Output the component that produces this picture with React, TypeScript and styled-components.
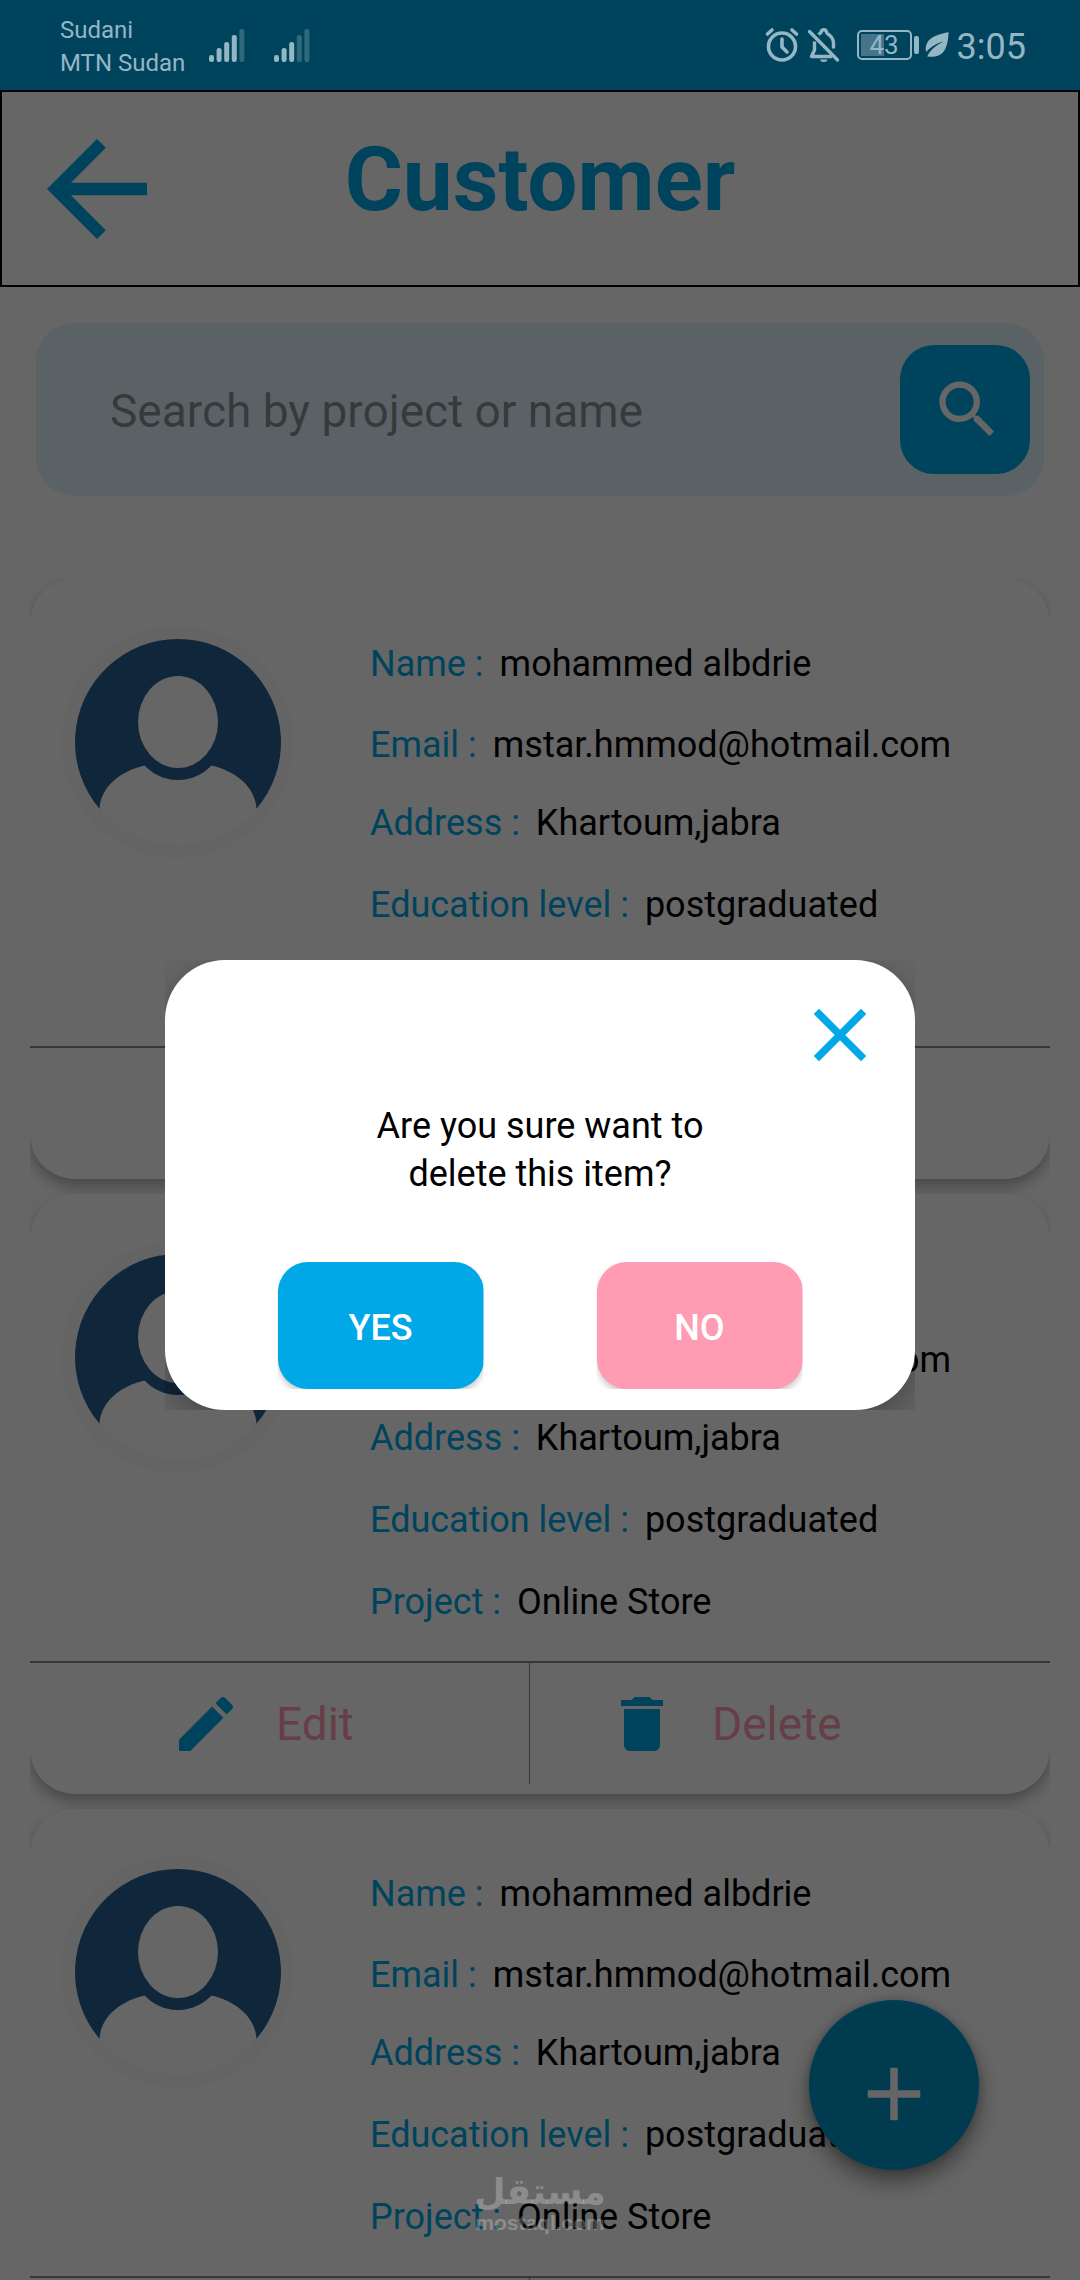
import React from "react";
import styled, { createGlobalStyle } from "styled-components";

const color = {
  primary: "#00a8e8",
  pink: "#ff9bb3",
  statusBar: "#00435d",
  statusText: "#95b6c4",
  field: "#e1f5fc",
  rule: "#8a8a8a",
};

const GlobalStyle = createGlobalStyle`
  * { box-sizing: border-box; }
  body { margin: 0; background: #fff; }
  body, button, input { font-family: Roboto, "Noto Sans", sans-serif; }
  button { border: 0; padding: 0; background: none; cursor: pointer; }
`;

const Screen = styled.div`
  position: relative;
  display: flex;
  flex-direction: column;
  height: 100vh;
  overflow: hidden;
`;

/* ---------- status bar ---------- */

const StatusBar = styled.div`
  flex: none;
  display: flex;
  align-items: center;
  justify-content: space-between;
  height: 90px;
  padding: 0 54px 0 60px;
  background: ${color.statusBar};
  color: ${color.statusText};
`;

const StatusGroup = styled.div<{ $gap: number }>`
  display: flex;
  align-items: center;
  gap: ${(p) => p.$gap}px;
`;

const Carriers = styled.div`
  padding-top: 4px;
  font-size: 24px;
  line-height: 33px;
  margin-right: 24px;
`;

const Signal = styled.svg`
  width: 36px;
  height: 34px;
  margin-right: 29px;
`;

const StatusIcon = styled.svg<{ $w: number }>`
  width: ${(p) => p.$w}px;
  height: 36px;
`;

const Battery = styled.div`
  display: flex;
  align-items: center;
  gap: 2px;
  margin-left: 10px;
`;

const BatteryBody = styled.div`
  display: flex;
  align-items: center;
  justify-content: center;
  width: 55px;
  height: 30px;
  border: 2px solid ${color.statusText};
  border-radius: 5px;
  background: linear-gradient(#45758a, #45758a) 2px 2px / 23px 22px no-repeat;
  font-size: 26px;
  line-height: 26px;
`;

const BatteryTip = styled.div`
  width: 5px;
  height: 18px;
  border-radius: 2px;
  background: ${color.statusText};
`;

const Clock = styled.time`
  padding: 4px 0 0 2px;
  font-size: 36px;
  line-height: 40px;
`;

/* ---------- page ---------- */

const Window = styled.div`
  position: relative;
  flex: 1;
  min-height: 0;
  overflow: hidden;
`;

const Header = styled.header`
  display: grid;
  grid-template-columns: 150px 1fr 150px;
  align-items: center;
  height: 197px;
  padding: 0 20px;
  border: 2px solid #000;
`;

const BackButton = styled.button`
  height: 150px;
  color: ${color.primary};
`;

const Title = styled.h1`
  margin: 0;
  padding-bottom: 18px;
  color: ${color.primary};
  font-size: 89px;
  line-height: 106px;
  font-weight: 700;
  text-align: center;
`;

const SearchBar = styled.form`
  display: flex;
  align-items: center;
  margin: 36px 36px 83px;
  padding: 22px 14px 22px 74px;
  border-radius: 38px;
  background: ${color.field};
`;

const SearchInput = styled.input`
  flex: 1;
  min-width: 0;
  border: 0;
  padding: 2px 0 0;
  outline: 0;
  background: transparent;
  font-size: 46px;
  line-height: 54px;
  &::placeholder {
    color: rgba(0, 0, 0, 0.42);
    opacity: 1;
  }
`;

const SearchButton = styled.button`
  display: grid;
  place-items: center;
  width: 130px;
  height: 129px;
  padding-left: 4px;
  border-radius: 34px;
  background: ${color.primary};
  color: #fff;
`;

const List = styled.ul`
  display: flex;
  flex-direction: column;
  gap: 15px;
  margin: 0 30px;
  padding: 0;
  list-style: none;
  clip-path: inset(0);
`;

const Card = styled.li`
  border-radius: 45px;
  background: #fff;
  box-shadow: 0 7px 14px rgba(0, 0, 0, 0.3);
`;

const CardBody = styled.div`
  display: flex;
  align-items: flex-start;
  gap: 77px;
  height: 467px;
  padding-left: 31px;
`;

const Avatar = styled.svg`
  flex: none;
  width: 232px;
  height: 232px;
  margin-top: 47px;
`;

const Info = styled.dl`
  display: grid;
  grid-template-rows: 81px 78px 82px 82px 42px;
  margin: 64px 0 0;
  font-size: 36px;
  line-height: 42px;
`;

const InfoRow = styled.div`
  display: flex;
  gap: 16px;
  white-space: nowrap;
  dt {
    color: ${color.primary};
  }
  dd {
    margin: 0;
    color: #000;
  }
`;

const CardActions = styled.div`
  display: grid;
  grid-template-columns: 500px 1fr;
  height: 133px;
  padding-bottom: 10px;
  border-top: 2px solid ${color.rule};
`;

const Action = styled.button<{ $indent: number; $ruled?: boolean }>`
  display: flex;
  align-items: center;
  gap: 34px;
  padding-left: ${(p) => p.$indent}px;
  border-right: ${(p) => (p.$ruled ? `1px solid ${color.rule}` : "0")};
  color: ${color.pink};
  font-size: 46px;
  line-height: 54px;
  svg {
    color: ${color.primary};
  }
`;

const AddButton = styled.button`
  position: absolute;
  right: 101px;
  bottom: 110px;
  display: grid;
  place-items: center;
  width: 170px;
  height: 170px;
  padding-top: 18px;
  border-radius: 50%;
  background: #0094c8;
  color: #fff;
  box-shadow: 0 12px 22px rgba(0, 0, 0, 0.42), 0 0 8px rgba(0, 0, 0, 0.2),
    inset 0 2px 2px rgba(0, 168, 232, 0.6);
`;

/* ---------- dialog ---------- */

const Scrim = styled.div`
  position: absolute;
  inset: 0;
  display: flex;
  align-items: center;
  justify-content: center;
  background: rgba(0, 0, 0, 0.6);
`;

const DialogClip = styled.div`
  width: 750px;
  max-width: 90%;
  clip-path: inset(0);
`;

const Dialog = styled.section`
  display: flex;
  flex-direction: column;
  align-items: center;
  padding: 30px 30px 21px;
  border-radius: 60px;
  background: #fff;
  box-shadow: 0 12px 36px rgba(0, 0, 0, 0.3);
`;

const CloseButton = styled.button`
  align-self: flex-end;
  height: 90px;
  color: ${color.primary};
`;

const Question = styled.p`
  width: 380px;
  margin: 22px 0 64px;
  font-size: 36px;
  line-height: 48px;
  text-align: center;
  color: #000;
`;

const Choices = styled.div`
  display: flex;
  gap: 113px;
`;

const ChoiceClip = styled.div`
  clip-path: inset(0);
`;

const Choice = styled.button<{ $bg: string }>`
  width: 206px;
  height: 127px;
  padding-top: 4px;
  border-radius: 30px;
  background: ${(p) => p.$bg};
  box-shadow: 0 4px 6px rgba(0, 0, 0, 0.2);
  color: #fff;
  font-size: 36px;
  line-height: 42px;
  font-weight: 500;
`;

const Watermark = styled.div`
  position: absolute;
  right: 0;
  bottom: 46px;
  left: 0;
  display: flex;
  flex-direction: column;
  align-items: center;
  color: rgba(255, 255, 255, 0.27);
  font-family: "Liberation Sans", sans-serif;
  font-weight: 700;
  font-size: 21px;
  line-height: 22px;
  pointer-events: none;
`;

const WatermarkArabic = styled.span`
  font-family: "DejaVu Sans", sans-serif;
  font-size: 36px;
  line-height: 40px;
`;

/* ---------- icons ---------- */

const GlyphSvg = styled.svg<{ $size: number }>`
  display: block;
  width: ${(p) => p.$size}px;
  height: ${(p) => p.$size}px;
  fill: currentColor;
`;

const paths = {
  back: "M20 11H7.83l5.59-5.59L12 4l-8 8 8 8 1.41-1.41L7.83 13H20v-2z",
  search:
    "M15.5 14h-.79l-.28-.27C15.41 12.59 16 11.11 16 9.5 16 5.91 13.09 3 9.5 3S3 5.91 3 9.5 5.91 16 9.5 16c1.61 0 3.09-.59 4.23-1.57l.27.28v.79l5 4.99L20.49 19l-4.99-5zm-6 0C7.01 14 5 11.99 5 9.5S7.01 5 9.5 5 14 7.01 14 9.5 11.99 14 9.5 14z",
  edit: "M3 17.25V21h3.75L17.81 9.94l-3.75-3.75L3 17.25zM20.71 7.04c.39-.39.39-1.02 0-1.41l-2.34-2.34c-.39-.39-1.02-.39-1.41 0l-1.83 1.83 3.75 3.75 1.83-1.83z",
  trash:
    "M6 19c0 1.1.9 2 2 2h8c1.1 0 2-.9 2-2V7H6v12zM19 4h-3.5l-1-1h-5l-1 1H5v2h14V4z",
  close:
    "M19 6.41L17.59 5 12 10.59 6.41 5 5 6.41 10.59 12 5 17.59 6.41 19 12 13.41 17.59 19 19 17.59 13.41 12z",
  add: "M19 13h-6v6h-2v-6H5v-2h6V5h2v6h6v2z",
};

const Glyph = ({ name, size }: { name: keyof typeof paths; size: number }) => (
  <GlyphSvg viewBox="0 0 24 24" $size={size} aria-hidden="true">
    <path d={paths[name]} />
  </GlyphSvg>
);

const SignalBars = ({ level }: { level: number }) => (
  <Signal viewBox="0 0 36 34" aria-label={`Signal ${level} of 5`}>
    {[7, 14, 20, 27, 33].map((h, i) => (
      <rect
        key={h}
        x={i * 7.6}
        y={34 - h}
        width="5"
        height={h}
        rx="2.2"
        fill={color.statusText}
        opacity={i < level ? 1 : 0.32}
      />
    ))}
  </Signal>
);

const UserAvatar = () => (
  <Avatar viewBox="0 0 232 232" aria-hidden="true">
    <circle cx="116" cy="116" r="116" fill="#f9f9f9" />
    <circle cx="117" cy="116" r="103" fill="#fff" />
    <path
      d="M38.500 182.700A103 103 0 1 1 195.500 182.700C194 160 174 145 150.500 139.500C143 147 132 154 117 154C102 154 91 147 83.500 139.500C60 145 40 160 38.500 182.700Z"
      fill="#285f91"
    />
    <ellipse cx="117" cy="96" rx="40" ry="46" fill="#fff" />
  </Avatar>
);

/* ---------- content ---------- */

const customer = [
  ["Name :", "mohammed albdrie"],
  ["Email :", "mstar.hmmod@hotmail.com"],
  ["Address :", "Khartoum,jabra"],
  ["Education level :", "postgraduated"],
  ["Project :", "Online Store"],
];

const CustomerCard = () => (
  <Card>
    <CardBody>
      <UserAvatar />
      <Info>
        {customer.map(([label, value]) => (
          <InfoRow key={label}>
            <dt>{label}</dt>
            <dd>{value}</dd>
          </InfoRow>
        ))}
      </Info>
    </CardBody>
    <CardActions>
      <Action type="button" $indent={140} $ruled>
        <Glyph name="edit" size={72} />
        Edit
      </Action>
      <Action type="button" $indent={76}>
        <Glyph name="trash" size={72} />
        Delete
      </Action>
    </CardActions>
  </Card>
);

export default function App() {
  return (
    <>
      <GlobalStyle />
      <Screen>
        <StatusBar>
          <StatusGroup $gap={0}>
            <Carriers>
              <div>Sudani</div>
              <div>MTN Sudan</div>
            </Carriers>
            <SignalBars level={4} />
            <SignalBars level={3} />
          </StatusGroup>
          <StatusGroup $gap={6}>
            <StatusIcon $w={38} viewBox="0 0 38 36" fill="none" stroke={color.statusText} strokeWidth="3.6" strokeLinecap="round">
              <circle cx="19" cy="19.500" r="13.500" />
              <path d="M19 12v8l5 5" />
              <path d="M4.500 7l4.500-4M33.500 7L29 3" />
            </StatusIcon>
            <StatusIcon $w={34} viewBox="0 0 34 36" fill="none" stroke={color.statusText} strokeWidth="3.400">
              <path d="M2.500 4.500L30.500 33" strokeLinecap="round" />
              <path d="M7.500 14.500V23L4.500 29.500H25" strokeLinejoin="round" />
              <path d="M11.500 7.500C12.500 6.500 14 6 14 5.500a2.800 2.800 0 0 1 5.600 0c0 1.500 6.900 3 6.900 10.500v5.500" />
              <path d="M13 32.500h7.500a3.800 3 0 0 1-7.500 0z" fill={color.statusText} stroke="none" />
            </StatusIcon>
            <Battery>
              <BatteryBody>43</BatteryBody>
              <BatteryTip />
            </Battery>
            <StatusIcon $w={24} viewBox="0 0 24 36" fill={color.statusText}>
              <path d="M23.500 5C13 7.500 3 10 1 19c-.5 2.500-.3 4.500.3 6C5 20.500 11 16.500 18.500 14.500 11 18.500 5 23 2.200 29.500c9 1 15-1 18.300-8C22.500 17 23.500 11 23.500 5z" />
            </StatusIcon>
            <Clock>3:05</Clock>
          </StatusGroup>
        </StatusBar>

        <Window>
          <Header>
            <BackButton type="button" aria-label="Back">
              <Glyph name="back" size={150} />
            </BackButton>
            <Title>Customer</Title>
          </Header>

          <SearchBar role="search">
            <SearchInput
              type="text"
              aria-label="Search by project or name"
              placeholder="Search by project or name"
            />
            <SearchButton type="button" aria-label="Search">
              <Glyph name="search" size={75} />
            </SearchButton>
          </SearchBar>

          <List>
            <CustomerCard />
            <CustomerCard />
            <CustomerCard />
          </List>

          <AddButton type="button" aria-label="Add customer">
            <Glyph name="add" size={90} />
          </AddButton>

          <Scrim>
            <DialogClip>
              <Dialog role="dialog" aria-modal="true" aria-labelledby="question">
                <CloseButton type="button" aria-label="Close">
                  <Glyph name="close" size={90} />
                </CloseButton>
                <Question id="question">Are you sure want to delete this item?</Question>
                <Choices>
                  <ChoiceClip>
                    <Choice type="button" $bg={color.primary}>YES</Choice>
                  </ChoiceClip>
                  <ChoiceClip>
                    <Choice type="button" $bg={color.pink}>NO</Choice>
                  </ChoiceClip>
                </Choices>
              </Dialog>
            </DialogClip>
          </Scrim>
        </Window>

        <Watermark>
          <WatermarkArabic lang="ar">مستقل</WatermarkArabic>
          <span>mostaql.com</span>
        </Watermark>
      </Screen>
    </>
  );
}
